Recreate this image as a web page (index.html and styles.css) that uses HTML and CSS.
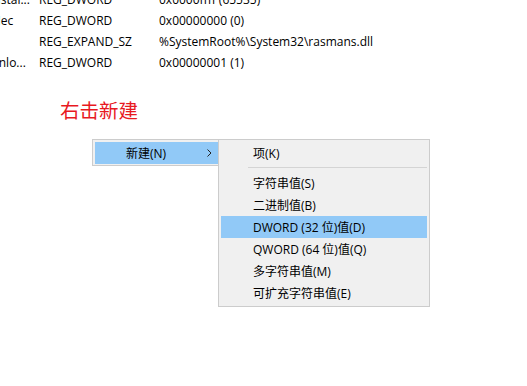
FILE: index.html
```html
<!DOCTYPE html>
<html lang="zh-CN">
<head>
    <meta charset="UTF-8">
    <title>注册表 - 右击新建</title>
    <link rel="stylesheet" href="styles.css">
</head>
<body>
    <!-- registry values list, scrolled so the top row is cut off -->
    <div class="values">
        <div class="row"><span class="name">Instal...</span><span class="type">REG_DWORD</span><span class="data">0x0000ffff (65535)</span></div>
        <div class="row"><span class="name">Mec</span><span class="type">REG_DWORD</span><span class="data">0x00000000 (0)</span></div>
        <div class="row"><span class="name"></span><span class="type">REG_EXPAND_SZ</span><span class="data">%SystemRoot%\System32\rasmans.dll</span></div>
        <div class="row"><span class="name">Unlo...</span><span class="type">REG_DWORD</span><span class="data">0x00000001 (1)</span></div>
    </div>

    <h2 class="note">右击新建</h2>

    <div class="menus">
        <div class="menu">
            <div class="item active">
                <span class="label">新建(N)</span>
                <svg class="arrow" width="5" height="8" viewBox="0 0 5 8"><polyline points="0.5,0.5 4,4 0.5,7.5" fill="none" stroke="#222" stroke-width="1"/></svg>
            </div>
        </div>
        <div class="menu submenu">
            <div class="item">项(K)</div>
            <div class="separator"></div>
            <div class="item">字符串值(S)</div>
            <div class="item">二进制值(B)</div>
            <div class="item active">DWORD (32 位)值(D)</div>
            <div class="item">QWORD (64 位)值(Q)</div>
            <div class="item">多字符串值(M)</div>
            <div class="item">可扩充字符串值(E)</div>
        </div>
    </div>
</body>
</html>
```

FILE: styles.css
```css
* {
  margin: 0;
  padding: 0;
  box-sizing: border-box;
}

body {
    font-family: "Open Sans", "Noto Sans CJK SC", sans-serif;
    font-size: 12px;
    color: #000;
    background-color: #fff;
    overflow: hidden;
}

.values {
    margin-top: -11px;
    margin-left: -10px;
}

.row {
    display: flex;
    height: 21px;
    line-height: 21px;
    white-space: nowrap;
}

.name {
    width: 49px;
}

.type {
    width: 120px;
}

.note {
    margin-top: 28px;
    padding-left: 60px;
    font-size: 19.5px;
    line-height: 20px;
    font-weight: normal;
    color: #e8191f;
}

.menus {
    display: flex;
    align-items: flex-start;
    margin-top: 18px;
    margin-left: 92px;
}

.menu {
    background-color: #f0f0f0;
    border: 1px solid #cccccc;
    padding: 2px;
}

.menu:first-child {
    width: 129px;
    padding-bottom: 1px;
}

.submenu {
    width: 212px;
    margin-left: -3px;
}

.item {
    display: flex;
    align-items: center;
    height: 22px;
    padding-left: 32px;
    white-space: nowrap;
}

.menu:first-child .item {
    padding-left: 31px;
}

.item.active {
    background-color: #91c9f7;
}

.label {
    flex: 1;
}

.arrow {
    margin-right: 6px;
}

.separator {
    height: 1px;
    margin: 3px 0 4px 27px;
    background-color: #d4d4d4;
}
```
